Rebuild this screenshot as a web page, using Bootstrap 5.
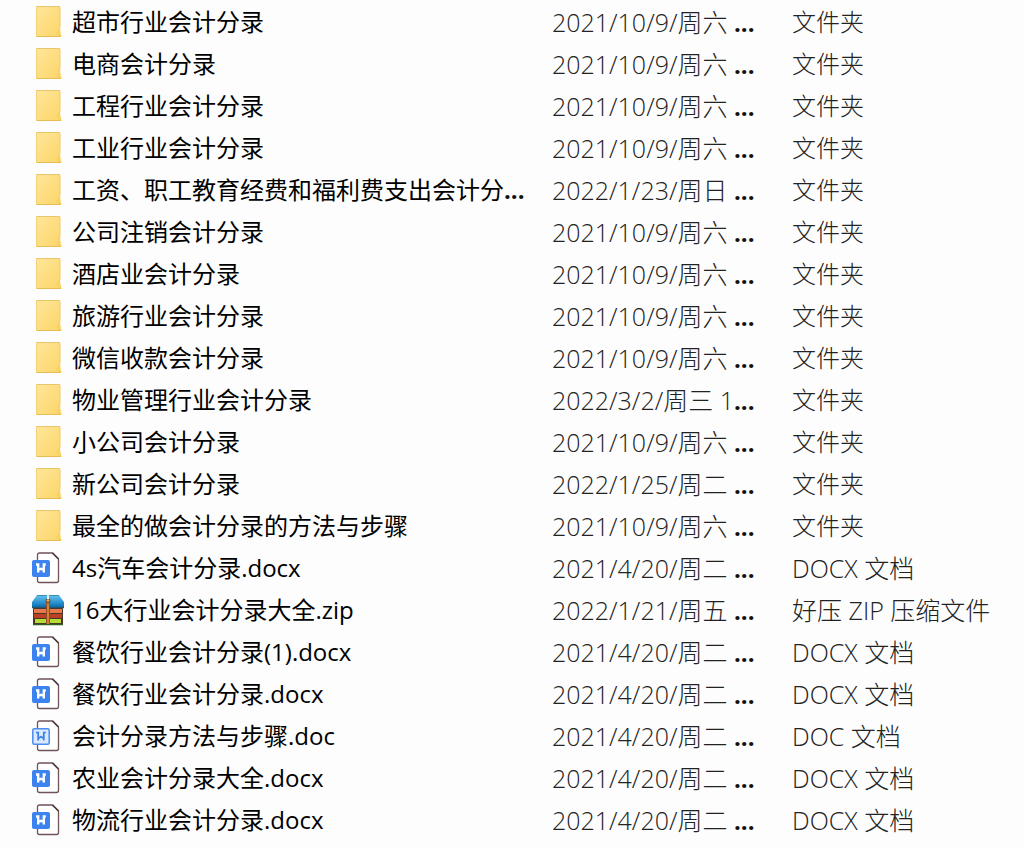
<!DOCTYPE html>
<html lang="zh-CN">
<head>
<meta charset="utf-8">
<meta name="viewport" content="width=device-width, initial-scale=1">
<title>会计分录</title>
<link href="https://cdn.jsdelivr.net/npm/bootstrap@5.3.0/dist/css/bootstrap.min.css" rel="stylesheet">
<style>
body { background: #fdfdfd; font-family: "Open Sans", "Noto Sans CJK SC", sans-serif; }
.file-pane { padding-top: 1px; }
.file-list { table-layout: fixed; font-size: 24px; line-height: 36px; color: #000; }
.file-list td { height: 42px; padding: 0; white-space: nowrap; }
.col-date { width: 240px; }
.col-type { width: 232px; }
.meta { color: #222; font-weight: 300; }
.wide { font-size: 25px; }
.file-icon { width: 32px; height: 34px; margin-right: 8px; flex: none; }
.dots { font-weight: 700; color: #111; font-size: 24px; line-height: 24px; }
</style>
</head>
<body>
<svg class="position-absolute" width="0" height="0" aria-hidden="true">
  <defs>
    <linearGradient id="paper" x1="0" y1="0" x2="1" y2="1"><stop offset="0" stop-color="#ffe69b"/><stop offset="1" stop-color="#fbd566"/></linearGradient>
    <linearGradient id="lid" x1="0" y1="0" x2="0" y2="1"><stop offset="0" stop-color="#68c5f1"/><stop offset="1" stop-color="#0871b7"/></linearGradient>
  </defs>
  <symbol id="folder" viewBox="0 0 32 34">
    <path d="M4 1H28V23L29.500 32H4Z" fill="url(#paper)"/>
    <path d="M4 1.500H28" stroke="#e9c66c"/><path d="M4 31.500H29" stroke="#e8bd55"/><path d="M4.500 1V32" stroke="#f3d27b"/>
    <path d="M28 2V22L25.500 28.500 29 31" fill="none" stroke="#f1cc69"/>
  </symbol>
  <symbol id="docx" viewBox="0 0 32 34">
    <path d="M5.500 9V4Q5.500 2 7.500 2H20.500L26.500 8V29.500Q26.500 31.500 24.500 31.500H7.500Q5.500 31.500 5.500 29.500V25" fill="#fff" stroke="#6e5358" stroke-width="1.300"/>
    <path d="M20.500 2L26.500 8" stroke="#4e3b42" stroke-width="1.600"/>
    <rect y="9" width="18" height="17" rx="2" fill="#3c83f0"/>
    <path d="M4 13.500H6.200V21.500M13.800 13.500H11.800V21.500M6 19L9 17.800 12 19" fill="none" stroke="#fff" stroke-width="2.400"/>
  </symbol>
  <symbol id="doc" viewBox="0 0 32 34">
    <path d="M5.500 9V4Q5.500 2 7.500 2H20.500L26.500 8V29.500Q26.500 31.500 24.500 31.500H7.500Q5.500 31.500 5.500 29.500V25" fill="#fff" stroke="#6e5358" stroke-width="1.300"/>
    <path d="M20.500 2L26.500 8" stroke="#4e3b42" stroke-width="1.600"/>
    <rect x=".8" y="9.800" width="16.400" height="15.400" rx="1.500" fill="#d9e9ff" stroke="#4b8cf0" stroke-width="1.500"/>
    <path d="M4 13.500H6.200V21.500M13.800 13.500H11.800V21.500M6 19.500L9 17.800 12 19.500" fill="none" stroke="#3d7fe4" stroke-width="1.700"/>
  </symbol>
  <symbol id="zip" viewBox="0 0 32 34">
    <rect x="1" y="15" width="30" height="17" rx="1" fill="#4c3424"/>
    <path d="M0 14V9L5 2H27L32 9V14Z" fill="url(#lid)"/>
    <path d="M5 2.500H27" stroke="#358fae"/>
    <rect x="2" y="16" width="28" height="4" fill="#e9784b"/><rect x="2" y="21" width="28" height="4" fill="#bb4028"/><rect x="3" y="26" width="26" height="4" fill="#b5dc38"/>
    <path d="M0 14.500H32" stroke="#27566e" stroke-width="1.500"/><path d="M1 31.500H31" stroke="#345b24" stroke-width="1.500"/>
    <rect x="14" y="7" width="4" height="24" fill="#914c22"/><path d="M16 7V31" stroke="#e5953c" stroke-width="1.500"/>
    <circle cx="16" cy="7.500" r="2" fill="#eba64b" stroke="#55463a"/>
    <path d="M16 2V6" stroke="#dff2f6" stroke-width="2"/>
  </symbol>
</svg>
<main class="container-fluid px-0 file-pane">
<table class="file-list w-100">
<colgroup><col><col class="col-date"><col class="col-type"></colgroup>
<tbody>
<tr><td><div class="d-flex align-items-center ps-4 ms-2"><svg class="file-icon"><use href="#folder"/></svg>超市行业会计分录</div></td><td class="meta wide">2021/10/9/周六 <span class="dots">...</span></td><td class="meta">文件夹</td></tr>
<tr><td><div class="d-flex align-items-center ps-4 ms-2"><svg class="file-icon"><use href="#folder"/></svg>电商会计分录</div></td><td class="meta wide">2021/10/9/周六 <span class="dots">...</span></td><td class="meta">文件夹</td></tr>
<tr><td><div class="d-flex align-items-center ps-4 ms-2"><svg class="file-icon"><use href="#folder"/></svg>工程行业会计分录</div></td><td class="meta wide">2021/10/9/周六 <span class="dots">...</span></td><td class="meta">文件夹</td></tr>
<tr><td><div class="d-flex align-items-center ps-4 ms-2"><svg class="file-icon"><use href="#folder"/></svg>工业行业会计分录</div></td><td class="meta wide">2021/10/9/周六 <span class="dots">...</span></td><td class="meta">文件夹</td></tr>
<tr><td><div class="d-flex align-items-center ps-4 ms-2"><svg class="file-icon"><use href="#folder"/></svg><span>工资、职工教育经费和福利费支出会计分<span class="dots">...</span></span></div></td><td class="meta wide">2022/1/23/周日 <span class="dots">...</span></td><td class="meta">文件夹</td></tr>
<tr><td><div class="d-flex align-items-center ps-4 ms-2"><svg class="file-icon"><use href="#folder"/></svg>公司注销会计分录</div></td><td class="meta wide">2021/10/9/周六 <span class="dots">...</span></td><td class="meta">文件夹</td></tr>
<tr><td><div class="d-flex align-items-center ps-4 ms-2"><svg class="file-icon"><use href="#folder"/></svg>酒店业会计分录</div></td><td class="meta wide">2021/10/9/周六 <span class="dots">...</span></td><td class="meta">文件夹</td></tr>
<tr><td><div class="d-flex align-items-center ps-4 ms-2"><svg class="file-icon"><use href="#folder"/></svg>旅游行业会计分录</div></td><td class="meta wide">2021/10/9/周六 <span class="dots">...</span></td><td class="meta">文件夹</td></tr>
<tr><td><div class="d-flex align-items-center ps-4 ms-2"><svg class="file-icon"><use href="#folder"/></svg>微信收款会计分录</div></td><td class="meta wide">2021/10/9/周六 <span class="dots">...</span></td><td class="meta">文件夹</td></tr>
<tr><td><div class="d-flex align-items-center ps-4 ms-2"><svg class="file-icon"><use href="#folder"/></svg>物业管理行业会计分录</div></td><td class="meta wide">2022/3/2/周三 1<span class="dots">...</span></td><td class="meta">文件夹</td></tr>
<tr><td><div class="d-flex align-items-center ps-4 ms-2"><svg class="file-icon"><use href="#folder"/></svg>小公司会计分录</div></td><td class="meta wide">2021/10/9/周六 <span class="dots">...</span></td><td class="meta">文件夹</td></tr>
<tr><td><div class="d-flex align-items-center ps-4 ms-2"><svg class="file-icon"><use href="#folder"/></svg>新公司会计分录</div></td><td class="meta wide">2022/1/25/周二 <span class="dots">...</span></td><td class="meta">文件夹</td></tr>
<tr><td><div class="d-flex align-items-center ps-4 ms-2"><svg class="file-icon"><use href="#folder"/></svg>最全的做会计分录的方法与步骤</div></td><td class="meta wide">2021/10/9/周六 <span class="dots">...</span></td><td class="meta">文件夹</td></tr>
<tr><td><div class="d-flex align-items-center ps-4 ms-2"><svg class="file-icon"><use href="#docx"/></svg>4s汽车会计分录.docx</div></td><td class="meta wide">2021/4/20/周二 <span class="dots">...</span></td><td class="meta wide">DOCX 文档</td></tr>
<tr><td><div class="d-flex align-items-center ps-4 ms-2"><svg class="file-icon"><use href="#zip"/></svg>16大行业会计分录大全.zip</div></td><td class="meta wide">2022/1/21/周五 <span class="dots">...</span></td><td class="meta wide">好压 ZIP 压缩文件</td></tr>
<tr><td><div class="d-flex align-items-center ps-4 ms-2"><svg class="file-icon"><use href="#docx"/></svg>餐饮行业会计分录(1).docx</div></td><td class="meta wide">2021/4/20/周二 <span class="dots">...</span></td><td class="meta wide">DOCX 文档</td></tr>
<tr><td><div class="d-flex align-items-center ps-4 ms-2"><svg class="file-icon"><use href="#docx"/></svg>餐饮行业会计分录.docx</div></td><td class="meta wide">2021/4/20/周二 <span class="dots">...</span></td><td class="meta wide">DOCX 文档</td></tr>
<tr><td><div class="d-flex align-items-center ps-4 ms-2"><svg class="file-icon"><use href="#doc"/></svg>会计分录方法与步骤.doc</div></td><td class="meta wide">2021/4/20/周二 <span class="dots">...</span></td><td class="meta wide">DOC 文档</td></tr>
<tr><td><div class="d-flex align-items-center ps-4 ms-2"><svg class="file-icon"><use href="#docx"/></svg>农业会计分录大全.docx</div></td><td class="meta wide">2021/4/20/周二 <span class="dots">...</span></td><td class="meta wide">DOCX 文档</td></tr>
<tr><td><div class="d-flex align-items-center ps-4 ms-2"><svg class="file-icon"><use href="#docx"/></svg>物流行业会计分录.docx</div></td><td class="meta wide">2021/4/20/周二 <span class="dots">...</span></td><td class="meta wide">DOCX 文档</td></tr>
</tbody>
</table>
</main>
<script src="https://cdn.jsdelivr.net/npm/bootstrap@5.3.0/dist/js/bootstrap.bundle.min.js"></script>
</body>
</html>
